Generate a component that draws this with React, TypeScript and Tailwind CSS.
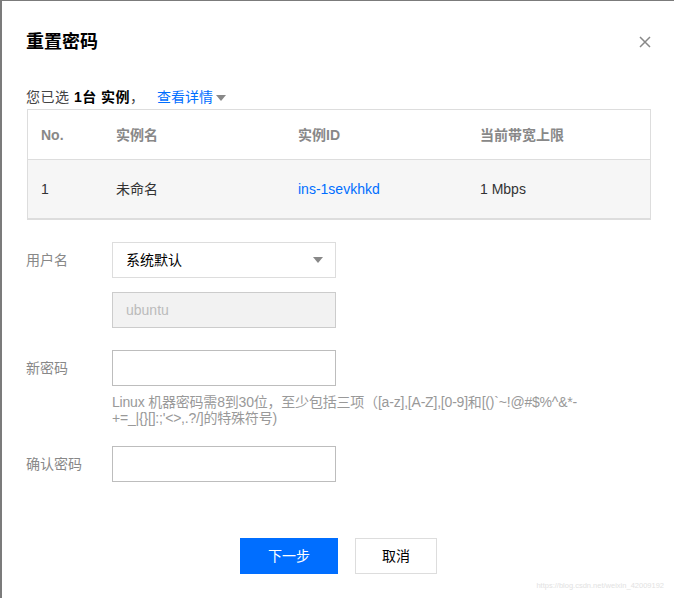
import React from 'react';

const font = { fontFamily: '"Liberation Sans", "Noto Sans CJK SC", sans-serif' };

function Field({ label, children }: { label: string; children: React.ReactNode }) {
  return (
    <div className="flex">
      <div className="w-[86px] shrink-0 leading-9 text-[14px] text-[#888]">{label}</div>
      <div className="flex flex-col">{children}</div>
    </div>
  );
}

export default function App() {
  return (
    <div
      className="w-[674px] h-[598px] bg-white border-l-2 border-t border-[#7b7b7b] box-border overflow-hidden flex flex-col pt-[29px] pl-[24px] pr-[23px]"
      style={font}
    >
      <div className="flex items-center justify-between h-6">
        <h2 className="text-[18px] font-bold text-black leading-6">重置密码</h2>
        <button className="w-3 h-3 text-[#888]">
          <svg viewBox="0 0 12 12" width="12" height="12" fill="none" stroke="currentColor" strokeWidth="1.5">
            <path d="M1 1L11 11M11 1L1 11" />
          </svg>
        </button>
      </div>

      <div className="mt-[33px] h-5 leading-5 text-[14px] text-[#444] flex items-center">
        <span className="tracking-[0.5px]">您已选&nbsp;</span>
        <span className="font-bold text-black tracking-[0.5px]">1台 实例</span>
        <span>，</span>
        <span className="ml-[13px] text-[#006eff]">查看详情</span>
        <svg className="ml-[3px] mt-px" width="10" height="6" viewBox="0 0 10 6">
          <path d="M0 0H10L5 6Z" fill="#888" />
        </svg>
      </div>

      <div className="mt-[2px] ml-px border border-b-2 border-[#ddd] text-[14px]">
        <div className="flex h-[50px] items-center pt-[2px] border-b border-[#ddd] font-bold text-[#888]">
          <div className="w-[88px] pl-[13px]">No.</div>
          <div className="w-[182px]">实例名</div>
          <div className="w-[182px]">实例ID</div>
          <div className="flex-1">当前带宽上限</div>
        </div>
        <div className="flex h-[58px] items-center pt-[1px] bg-[#f6f6f6] text-[#333]">
          <div className="w-[88px] pl-[13px]">1</div>
          <div className="w-[182px]">未命名</div>
          <div className="w-[182px] text-[#006eff]">ins-1sevkhkd</div>
          <div className="flex-1">1 Mbps</div>
        </div>
      </div>

      <div className="mt-[22px] flex flex-col">
        <Field label="用户名">
          <div className="w-[224px] h-9 border border-[#ddd] flex items-center justify-between pl-[13px] pr-[12px] text-[14px] text-black">
            <span>系统默认</span>
            <svg width="10" height="6" viewBox="0 0 10 6">
              <path d="M0 0H10L5 6Z" fill="#888" />
            </svg>
          </div>
          <div className="mt-[14px] w-[224px] h-9 border border-[#ccc] bg-[#f2f2f2] flex items-center pl-[13px] text-[14px] text-[#bbb]">
            ubuntu
          </div>
        </Field>

        <div className="mt-[22px]">
          <Field label="新密码">
            <div className="w-[224px] h-9 border border-[#bdbdbd]" />
            <p className="mt-[8px] w-[500px] text-[14px] leading-4 text-[#999] tracking-[-0.2px]">
              Linux 机器密码需8到30位，至少包括三项（[a-z],[A-Z],[0-9]和[()`~!@#$%^&amp;*-
              <br />
              +=_|{'{}'}[]:;'&lt;&gt;,.?/]的特殊符号)
            </p>
          </Field>
        </div>

        <div className="mt-[20px]">
          <Field label="确认密码">
            <div className="w-[224px] h-9 border border-[#bdbdbd]" />
          </Field>
        </div>
      </div>

      <div className="mt-[56px] flex justify-center gap-[17px] text-[14px]">
        <button className="w-[98px] h-9 bg-[#006eff] text-white">下一步</button>
        <button className="w-[82px] h-9 border border-[#ddd] bg-white text-black">取消</button>
      </div>

      <div className="mt-[4px] flex justify-end mr-[-13px] text-[7.5px] text-[#e2e2e2] leading-4">
        https://blog.csdn.net/weixin_42009192
      </div>
    </div>
  );
}
